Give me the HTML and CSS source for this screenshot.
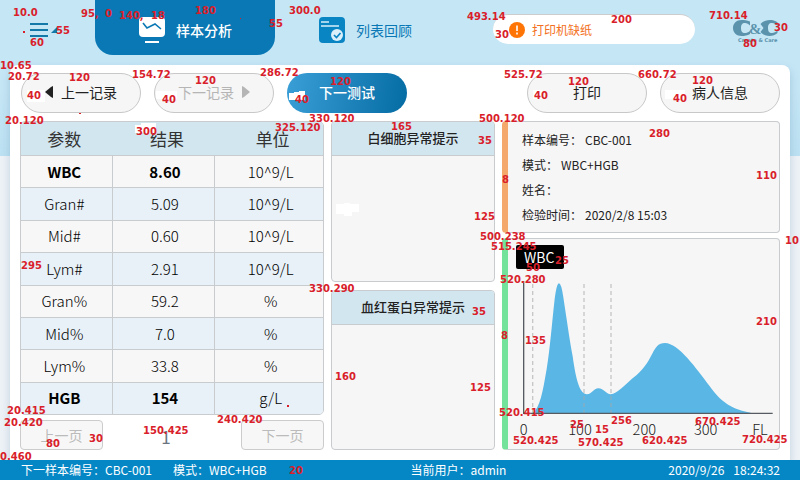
FILE: index.html
```html
<!DOCTYPE html>
<html lang="zh-CN">
<head>
<meta charset="utf-8">
<meta name="viewport" content="width=device-width, initial-scale=1">
<title>样本分析</title>
<link rel="stylesheet" href="styles.css">
</head>
<body>
<header class="topbar">
  <button class="menu" type="button" aria-label="菜单">
    <svg width="30" height="16" viewBox="0 0 30 16"><path d="M0 2h18M0 8h18M0 14h18" stroke="#1279a8" stroke-width="2"/><path d="M21 11l6-6v6z" fill="#1279a8"/></svg>
  </button>
  <nav class="tabs">
    <a class="tab active" href="#analysis">
      <svg width="26" height="26" viewBox="0 0 26 26"><rect width="26" height="20" rx="4" fill="#fff"/><path d="M4 6l4 5 8-4 6 5" fill="none" stroke="#0a78b4" stroke-width="1.6"/><path d="M6 25h14" stroke="#fff" stroke-width="2"/></svg>
      样本分析
    </a>
    <a class="tab" href="#list">
      <svg width="26" height="26" viewBox="0 0 26 26"><rect width="26" height="26" rx="4" fill="#0a85c4"/><path d="M2 5h8M2 9h18" stroke="#d9effa" stroke-width="1.6"/><circle cx="18" cy="18" r="6" fill="#d9effa"/><path d="M15 18l2.500 2.500L21.500 16" fill="none" stroke="#0a85c4" stroke-width="1.700"/></svg>
      列表回顾
    </a>
  </nav>
  <div class="alert" role="status">
    <svg width="16" height="16" viewBox="0 0 16 16"><circle cx="8" cy="8" r="8" fill="#ff7505"/><path d="M8 3.500v5.500M8 10.500v2" stroke="#fff" stroke-width="1.600"/></svg>
    打印机缺纸
  </div>
  <svg class="logo" width="46" height="24" viewBox="0 0 46 24" role="img" aria-label="C&amp;C Create &amp; Care">
    <g fill="#5b93ad"><path d="M17 1.500C14 .3 11 0 8.500 0 3.500 0 0 3.500 0 8s3.500 8 8.500 8c3 0 6-.5 8.500-2v-3c-2 1.500-3.500 2-5 2C9 13 8 11 8 8s1-5 4-5c2 0 3.500 1 5 2.500z"/><path d="M27.500 4C29.500 1.500 33 0 37 0c2.500 0 5 .5 7.500 2.200V6C43 4 41 3 39 3c-3.200 0-4 2-4 5s1 5 4 5c2 0 4-.9 5.500-2.700V13c-2 2-5 3-8 3-4 0-7-1.500-9-4l3-4z"/></g>
    <text x="16" y="14" class="logo-amp">&amp;</text>
    <text x="5" y="22" class="logo-tag">Create &amp; Care</text>
  </svg>
</header>

<main class="panel">
  <div class="toolbar">
    <button class="pill" type="button"><svg width="8" height="12" viewBox="0 0 8 12"><path d="M8 0v12L6 11 0 6l6-5z" fill="#222"/></svg>上一记录</button>
    <button class="pill" type="button" disabled>下一记录<svg width="8" height="12" viewBox="0 0 8 12"><path d="M0 0v12l2-1 6-5-6-5z" fill="#b5b5b5"/></svg></button>
    <button class="pill primary" type="button">下一测试</button>
    <button class="pill print" type="button">打印</button>
    <button class="pill" type="button">病人信息</button>
  </div>

  <div class="columns">
    <section class="results">
      <table>
        <thead><tr><th scope="col">参数</th><th scope="col">结果</th><th scope="col">单位</th></tr></thead>
        <tbody>
          <tr class="key"><td>WBC</td><td>8.60</td><td>10^9/L</td></tr>
          <tr><td>Gran#</td><td>5.09</td><td>10^9/L</td></tr>
          <tr><td>Mid#</td><td>0.60</td><td>10^9/L</td></tr>
          <tr><td>Lym#</td><td>2.91</td><td>10^9/L</td></tr>
          <tr><td>Gran%</td><td>59.2</td><td>%</td></tr>
          <tr><td>Mid%</td><td>7.0</td><td>%</td></tr>
          <tr><td>Lym%</td><td>33.8</td><td>%</td></tr>
          <tr class="key"><td>HGB</td><td>154</td><td>g/L</td></tr>
        </tbody>
      </table>
      <div class="pager">
        <button type="button" disabled>上一页</button>
        <span>1</span>
        <button type="button" disabled>下一页</button>
      </div>
    </section>

    <div class="hints">
      <section class="hint"><h2>白细胞异常提示</h2></section>
      <section class="hint"><h2>血红蛋白异常提示</h2></section>
    </div>

    <div class="side">
      <dl class="card info">
        <div><dt>样本编号：</dt><dd>CBC-001</dd></div>
        <div><dt>模式：</dt><dd>WBC+HGB</dd></div>
        <div><dt>姓名：</dt><dd></dd></div>
        <div><dt>检验时间：</dt><dd>2020/2/8 15:03</dd></div>
      </dl>
      <section class="card chart">
        <h2>WBC</h2>
        <svg viewBox="54 0 813 537" role="img" aria-label="WBC">
          <path d="M128 433C150 415 158 370 170 300C180 240 186 160 194 90Q200 43 207 43Q214 43 220 85C230 150 240 220 248 262C258 335 270 376 291 376C306 376 310 358 325 358C342 358 348 376 362 376C382 374 400 350 440 318C495 270 485 222 525 222C565 222 620 300 658 350C700 410 740 425 795 433Z" fill="#5ab6e4"/>
          <path d="M128 45V432M282 45V432M363 45V432" class="guide"/>
          <path d="M101 36V433H848" class="axis"/>
          <g class="ticks"><text x="101" y="499">0</text><text x="270" y="499">100</text><text x="463" y="499">200</text><text x="647" y="499">300</text><text x="810" y="499">FL</text></g>
        </svg>
      </section>
    </div>
  </div>
</main>

<footer class="status">
  <span>下一样本编号：CBC-001</span>
  <span class="mode">模式：WBC+HGB</span>
  <span class="user">当前用户：admin</span>
  <span class="clock"><time>2020/9/26</time><time>18:24:32</time></span>
</footer>

<svg class="notes" width="800" height="480" viewBox="0 0 800 480">
  <g fill="#fff">
    <path d="M289 93h5v-1h5v-1h6v9h-16zM336 204h8v-1h6v1h9v8h-7v4h-8v-2h-8zM27 90h18v12H27zM156 91h21v8h-21zM665 90h20v9h-20zM533 90h10v9h-10zM135 125h6v-2h15v10h-21z"/>
  </g>
  <text x="13" y="16">10.0</text><text x="81" y="17">95,</text><text x="105" y="17">0</text>
  <text x="119" y="19">140,</text><text x="151" y="19">18</text><text x="195" y="14">180</text>
  <text x="56" y="34">55</text><text x="30" y="46">60</text><text x="289" y="14">300.0</text><text x="269" y="27">55</text>
  <text x="467" y="20">493.14</text><text x="495" y="38">30</text><text x="611" y="23">200</text>
  <text x="709" y="19">710.14</text><text x="774" y="31">30</text><text x="743" y="47">80</text>
  <text x="0" y="69">10.65</text><text x="8" y="80">20.72</text><text x="69" y="81">120</text>
  <text x="132" y="78">154.72</text><text x="195" y="84">120</text><text x="260" y="76">286.72</text><text x="330" y="85">120</text>
  <text x="504" y="78">525.72</text><text x="568" y="85">120</text><text x="638" y="78">660.72</text><text x="692" y="84">120</text>
  <text x="27" y="99">40</text><text x="162" y="103">40</text><text x="295" y="103">40</text><text x="534" y="99">40</text><text x="673" y="102">40</text>
  <text x="5" y="124">20.120</text><text x="136" y="135">300</text><text x="275" y="131">325.120</text><text x="309" y="122">330.120</text>
  <text x="391" y="130">165</text><text x="479" y="122">500.120</text><text x="478" y="144">35</text><text x="649" y="137">280</text>
  <text x="502" y="183">8</text><text x="756" y="179">110</text><text x="474" y="220">125</text><text x="21" y="269">295</text>
  <text x="480" y="240">500.238</text><text x="491" y="250">515.245</text><text x="555" y="264">25</text><text x="526" y="271">50</text>
  <text x="500" y="283">520.280</text><text x="309" y="292">330.290</text><text x="785" y="244">10</text><text x="472" y="315">35</text>
  <text x="525" y="344">135</text><text x="756" y="325">210</text><text x="501" y="339">8</text><text x="335" y="380">160</text><text x="470" y="391">125</text>
  <text x="7" y="414">20.415</text><text x="4" y="426">20.420</text><text x="143" y="434">150.425</text><text x="217" y="423">240.420</text>
  <text x="499" y="416">520.415</text><text x="570" y="428">25</text><text x="595" y="433">15</text><text x="611" y="424">256</text>
  <text x="695" y="425">670.425</text><text x="513" y="444">520.425</text><text x="578" y="446">570.425</text><text x="642" y="444">620.425</text><text x="742" y="443">720.425</text>
  <text x="46" y="447">80</text><text x="89" y="442">30</text><text x="0" y="460">0.460</text><text x="289" y="474">20</text>
  <path d="M23 31h2v2h-2zM79 113h2v1h-2zM287 405h2v2h-2zM240 18h1v1h-1z"/>
</svg>
</body>
</html>
```
FILE: styles.css
```css
* { box-sizing: border-box; }

body {
  position: relative;
  display: flex;
  flex-direction: column;
  min-height: 100vh;
  margin: 0;
  background: linear-gradient(#c5e6f5 0, #c5e6f5 90px, #bce1f2 156px, #edf2f6 156px);
  color: #222;
  font-family: "Noto Sans CJK SC", sans-serif;
  font-size: 12px;
  line-height: 16px;
}

button { font: inherit; color: inherit; cursor: pointer; }
button:disabled { cursor: default; }
h2, dl, dd { margin: 0; }
svg { flex: none; }

.topbar {
  display: flex;
  align-items: flex-start;
  height: 65px;
  padding-right: 21px;
}
.menu {
  width: 95px;
  height: 60px;
  padding: 0 0 0 30px;
  border: 0;
  background: none;
  text-align: left;
}
.menu svg { display: block; }
.tabs { display: flex; }
.tab {
  display: flex;
  align-items: center;
  gap: 11px;
  height: 55px;
  padding: 4px 44px 0;
  color: #0a78b4;
  font-size: 14px;
  text-decoration: none;
}
.tab.active {
  padding-right: 43px;
  border-radius: 0 0 18px 18px;
  background: #0a78b4;
  color: #fff;
  font-weight: 500;
}
.alert {
  display: flex;
  align-items: center;
  gap: 7px;
  width: 202px;
  height: 30px;
  margin: 14px 0 0 auto;
  padding-left: 16px;
  border-top: 1px solid #ccc;
  border-radius: 15px;
  background: #fff;
  color: #f37021;
}
.logo { margin: 20px 0 0 38px; }
.logo-amp { font: bold 15px "Liberation Serif", serif; fill: #5b93ad; }
.logo-tag { font: bold 5px "DejaVu Sans", sans-serif; fill: #5b93ad; }

.panel {
  flex: 1;
  display: flex;
  flex-direction: column;
  gap: 8px;
  margin: 0 10px;
  padding: 8px 10px 10px;
  border-radius: 8px 8px 0 0;
  background: #fff;
  box-shadow: 0 4px 8px rgba(60, 110, 150, .25);
}
.toolbar { display: flex; gap: 13px; padding-left: 1px; }
.pill {
  display: flex;
  align-items: center;
  justify-content: center;
  gap: 8px;
  width: 120px;
  height: 40px;
  padding: 0 0 2px;
  border: 1px solid #c8c8c8;
  border-radius: 20px;
  background: #f6f6f6;
  font-size: 14px;
}
.pill:disabled { color: #b5b5b5; }
.pill.primary {
  border: 0;
  background: linear-gradient(100deg, #3a9fd6, #056ba3);
  color: #fff;
  font-weight: 500;
}
.pill.print { margin-left: auto; }

.columns {
  flex: 1;
  display: grid;
  grid-template-columns: 304fr 164fr 278fr;
  gap: 7px;
}
.results { display: flex; flex-direction: column; gap: 5px; }
table {
  flex: 1;
  width: 100%;
  table-layout: fixed;
  border: 1px solid #c8cccf;
  border-radius: 5px;
  border-spacing: 0;
  overflow: hidden;
  background: #f7f7f7;
  text-align: center;
}
th, td { padding: 0; border-left: 1px solid #c8cccf; }
th { height: 33px; padding-left: 8px; border-left: 0; background: #d2e6f0; font-size: 17px; font-weight: 400; color: #333; }
th:nth-child(1) { width: 30%; padding: 0 4px 0 0; }
th:nth-child(2) { width: 34%; }
td { padding-left: 3px; border-top: 1px solid #c8cccf; font-size: 15px; font-weight: 300; color: #000; }
td:first-child { padding: 0 4px 0 0; border-left: 0; }
tbody tr:nth-child(even) { background: #e8f1f7; }
.key td:not(:last-child) { font-weight: 700; }
.pager { display: flex; align-items: center; justify-content: space-between; }
.pager button {
  width: 83px;
  height: 30px;
  padding: 0;
  border: 1px solid #ccc;
  border-radius: 4px;
  background: #f7f7f7;
  color: #bbb;
  font-size: 14px;
}
.pager span { padding-top: 4px; padding-right: 12px; color: #6a7480; font-size: 17px; }

.hints { display: grid; grid-template-rows: 1fr 1fr; gap: 8px; }
.hint {
  border: 1px solid #c8cccf;
  border-radius: 4px;
  background: #f6f6f6;
  overflow: hidden;
}
.hint h2 {
  height: 34px;
  border-bottom: 1px solid #c8cccf;
  background: #d2e6f0;
  font-size: 13px;
  font-weight: 500;
  line-height: 32px;
  text-align: center;
}

.side { display: flex; flex-direction: column; gap: 5px; }
.card {
  border: 1px solid #c8cccf;
  border-left: 6px solid #f4a86c;
  border-radius: 4px;
  background: #f6f6f6;
}
.info { padding: 5px 14px; }
.info div { display: flex; gap: 3px; line-height: 25px; }
.chart { flex: 1; border-left-color: #73e29a; }
.chart h2 {
  width: 48px;
  margin: 6px 0 0 8px;
  padding-left: 8px;
  border-radius: 2px;
  background: #000;
  color: #fff;
  font-size: 14px;
  font-weight: 400;
  line-height: 24px;
}
.chart svg { display: block; width: 100%; }
.guide { fill: none; stroke: #a8a8a8; stroke-opacity: .6; stroke-width: 4; stroke-dasharray: 12 9; }
.axis { fill: none; stroke: #555b60; stroke-width: 4; }
.ticks { font-size: 44px; font-weight: 300; fill: #222; text-anchor: middle; }

.status {
  display: grid;
  grid-template-columns: auto auto 1fr auto;
  height: 20px;
  padding: 0 20px 0 21px;
  background: #0587c6;
  color: #fff;
  line-height: 20px;
}
.mode { margin-left: 21px; }
.user { padding-right: 18px; text-align: center; }
.clock { display: flex; gap: 9px; }

/* Measurement labels drawn over the screen */
.notes {
  position: absolute;
  top: 0;
  left: 0;
  fill: #d9202a;
  font: bold 10px "DejaVu Sans", sans-serif;
  pointer-events: none;
}
```
